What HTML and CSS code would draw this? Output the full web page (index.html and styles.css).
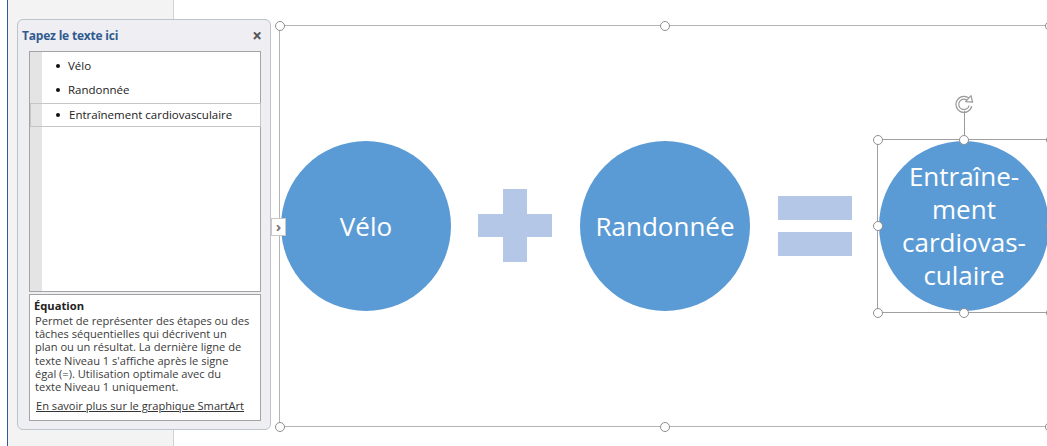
FILE: index.html
```html
<!DOCTYPE html>
<html lang="fr">
  <head>
    <meta charset="UTF-8" />
    <title>SmartArt - Équation</title>
    <link rel="stylesheet" href="styles.css">
  </head>
  <body>
    <div class="app">
      <div class="rail"></div>
      <aside class="sidebar"></aside>

      <main class="doc">
        <div class="frame">
          <span class="handle tl"></span>
          <span class="handle tm"></span>
          <span class="handle tr"></span>
          <span class="handle bl"></span>
          <span class="handle bm"></span>
          <span class="handle br"></span>

          <div class="diagram">
            <div class="node">Vélo</div>
            <div class="op plus"><span class="bar-h"></span><span class="bar-v"></span></div>
            <div class="node">Randonnée</div>
            <div class="op equals"><span></span><span></span></div>
            <div class="node selected">
              <span class="node-text">Entraîne-<br>ment<br>cardiovas-<br>culaire</span>
              <div class="sel-box">
                <span class="handle tl"></span>
                <span class="handle tm"></span>
                <span class="handle tr"></span>
                <span class="handle ml"></span>
                <span class="handle mr"></span>
                <span class="handle bl"></span>
                <span class="handle bm"></span>
                <span class="handle br"></span>
                <div class="rotate">
                  <svg width="20" height="20" viewBox="0 0 20 20">
                    <path d="M15.2 6.4 A6.6 6.6 0 1 0 16.4 11.8" fill="none" stroke="#9a9a9a" stroke-width="4"/>
                    <path d="M15.2 6.4 A6.6 6.6 0 1 0 16.4 11.8" fill="none" stroke="#fff" stroke-width="1.6"/>
                    <path d="M11.6 7.6 L18.6 8.2 L17 1.6 Z" fill="#fff" stroke="#9a9a9a" stroke-width="1.2" stroke-linejoin="round"/>
                  </svg>
                </div>
              </div>
            </div>
          </div>
        </div>
      </main>

      <section class="text-pane">
        <header class="pane-head">
          <span class="pane-title">Tapez le texte ici</span>
          <span class="pane-close">×</span>
        </header>
        <div class="pane-list">
          <ul class="items">
            <li class="item">Vélo</li>
            <li class="item">Randonnée</li>
            <li class="item current">Entraînement cardiovasculaire</li>
          </ul>
        </div>
        <div class="pane-desc">
          <h4>Équation</h4>
          <p>Permet de représenter des étapes ou des tâches séquentielles qui décrivent un plan ou un résultat. La dernière ligne de texte Niveau 1 s'affiche après le signe égal (=). Utilisation optimale avec du texte Niveau 1 uniquement.</p>
          <a href="#">En savoir plus sur le graphique SmartArt</a>
        </div>
        <span class="pane-toggle">›</span>
      </section>
    </div>
  </body>
</html>
```

FILE: styles.css
```css
body {
  margin: 0;
  width: 1047px;
  height: 446px;
  overflow: hidden;
  background: #ffffff;
  font-family: "Open Sans", "Noto Sans", Arial, sans-serif;
}

.app {
  position: relative;
  display: flex;
  height: 446px;
}

.rail {
  flex: none;
  width: 7px;
  background: #ffffff;
}

.sidebar {
  flex: none;
  width: 165px;
  border-left: 1px solid #2f5b9a;
  border-right: 1px solid #d2d2d2;
  background: #f3f3f3;
}

.doc {
  flex: none;
  padding: 25px 0 0 105px;
}

/* outer smartart frame */
.frame {
  position: relative;
  box-sizing: border-box;
  width: 771px;
  height: 402px;
  border: 1px solid #b4b4b4;
}

.handle {
  position: absolute;
  box-sizing: border-box;
  width: 10px;
  height: 10px;
  border: 1.5px solid #8f8f8f;
  border-radius: 50%;
  background: #ffffff;
  z-index: 2;
}

.tl { left: -5.5px; top: -5.5px; }
.tm { left: calc(50% - 5px); top: -5.5px; }
.tr { right: -5.5px; top: -5.5px; }
.ml { left: -5.5px; top: calc(50% - 5px); }
.mr { right: -5.5px; top: calc(50% - 5px); }
.bl { left: -5.5px; bottom: -5.5px; }
.bm { left: calc(50% - 5px); bottom: -5.5px; }
.br { right: -5.5px; bottom: -5.5px; }

.diagram {
  display: flex;
  align-items: center;
  height: 100%;
  padding-left: 1px;
}

.node {
  position: relative;
  flex: none;
  display: flex;
  align-items: center;
  justify-content: center;
  width: 170px;
  height: 170px;
  border-radius: 50%;
  background: #5b9bd5;
  color: #ffffff;
  font-size: 26px;
  text-align: center;
}

.node-text {
  line-height: 33px;
  margin-top: -1px;
}

.op {
  position: relative;
  flex: none;
  width: 74px;
  height: 74px;
}

.plus { margin: 0 28px 0 27px; }
.equals { margin: 0 27px 0 28px; }

.op span {
  position: absolute;
  background: #b4c7e7;
}

.plus .bar-h { left: 0; top: 25px; width: 74px; height: 23px; }
.plus .bar-v { left: 25px; top: 0; width: 24px; height: 73px; }

.equals span { left: 0; width: 74px; height: 24px; }
.equals span:first-child { top: 7px; }
.equals span:last-child { top: 43px; }

.sel-box {
  position: absolute;
  left: -2px;
  top: -2px;
  right: -2px;
  bottom: -2px;
  border: 1px solid #a0a0a0;
}

.rotate {
  position: absolute;
  left: calc(50% - 10px);
  top: -46px;
  width: 20px;
  height: 46px;
}

.rotate svg {
  display: block;
}

.rotate::after {
  content: "";
  position: absolute;
  left: 9.5px;
  top: 17px;
  width: 1px;
  height: 29px;
  background: #9a9a9a;
}

/* text pane */
.text-pane {
  position: absolute;
  left: 17px;
  top: 19px;
  box-sizing: border-box;
  width: 254px;
  height: 411px;
  padding: 0 9px 8px 11px;
  border: 1px solid #bcc4cc;
  border-radius: 6px;
  background: #eeeef3;
  display: flex;
  flex-direction: column;
}

.pane-head {
  display: flex;
  justify-content: space-between;
  align-items: center;
  height: 31px;
  margin-left: -7px;
}

.pane-title {
  color: #2f5b8f;
  font-size: 12px;
  font-weight: bold;
  letter-spacing: -0.2px;
}

.pane-close {
  color: #555555;
  font-size: 17px;
  font-weight: bold;
  margin-right: -1px;
}

.pane-list {
  box-sizing: border-box;
  height: 242px;
  border: 1px solid #a3a3a3;
  background: linear-gradient(to right, #e4e4e4 12px, #ffffff 12px);
}

.items {
  list-style: none;
  margin: 2px 0 0;
  padding: 0;
}

.item {
  position: relative;
  height: 24px;
  line-height: 24px;
  padding-left: 38px;
  font-size: 11.5px;
  color: #222222;
}

.item::before {
  content: "";
  position: absolute;
  left: 26px;
  top: 10px;
  width: 4px;
  height: 4px;
  border-radius: 50%;
  background: #111111;
}

.item.current {
  box-sizing: border-box;
  border: 1px solid #c6c6c6;
  margin-right: -1px;
  line-height: 22px;
  margin-top: 1px;
}

.item.current::before {
  left: 25px;
  top: 9px;
}

.pane-desc {
  box-sizing: border-box;
  height: 128px;
  margin-top: 2px;
  padding: 3px 4px 0 4px;
  border: 1px solid #a3a3a3;
  background: #ffffff;
  color: #3a3a3a;
  font-size: 11.1px;
}

.pane-desc h4 {
  margin: 0;
  font-size: 11.2px;
  font-weight: bold;
  color: #222222;
  line-height: 15px;
}

.pane-desc p {
  margin: 1px 6px 5px 1px;
  line-height: 13.3px;
}

.pane-desc a,
.pane-desc a:visited {
  margin-left: 2px;
  color: #333333;
  text-decoration: underline;
}

.pane-toggle {
  position: absolute;
  right: -16px;
  top: 198px;
  box-sizing: border-box;
  width: 15px;
  height: 18px;
  border: 1px solid #c8c8c8;
  background: #ffffff;
  color: #777777;
  font-size: 15px;
  font-weight: bold;
  line-height: 14px;
  text-align: center;
}
```
